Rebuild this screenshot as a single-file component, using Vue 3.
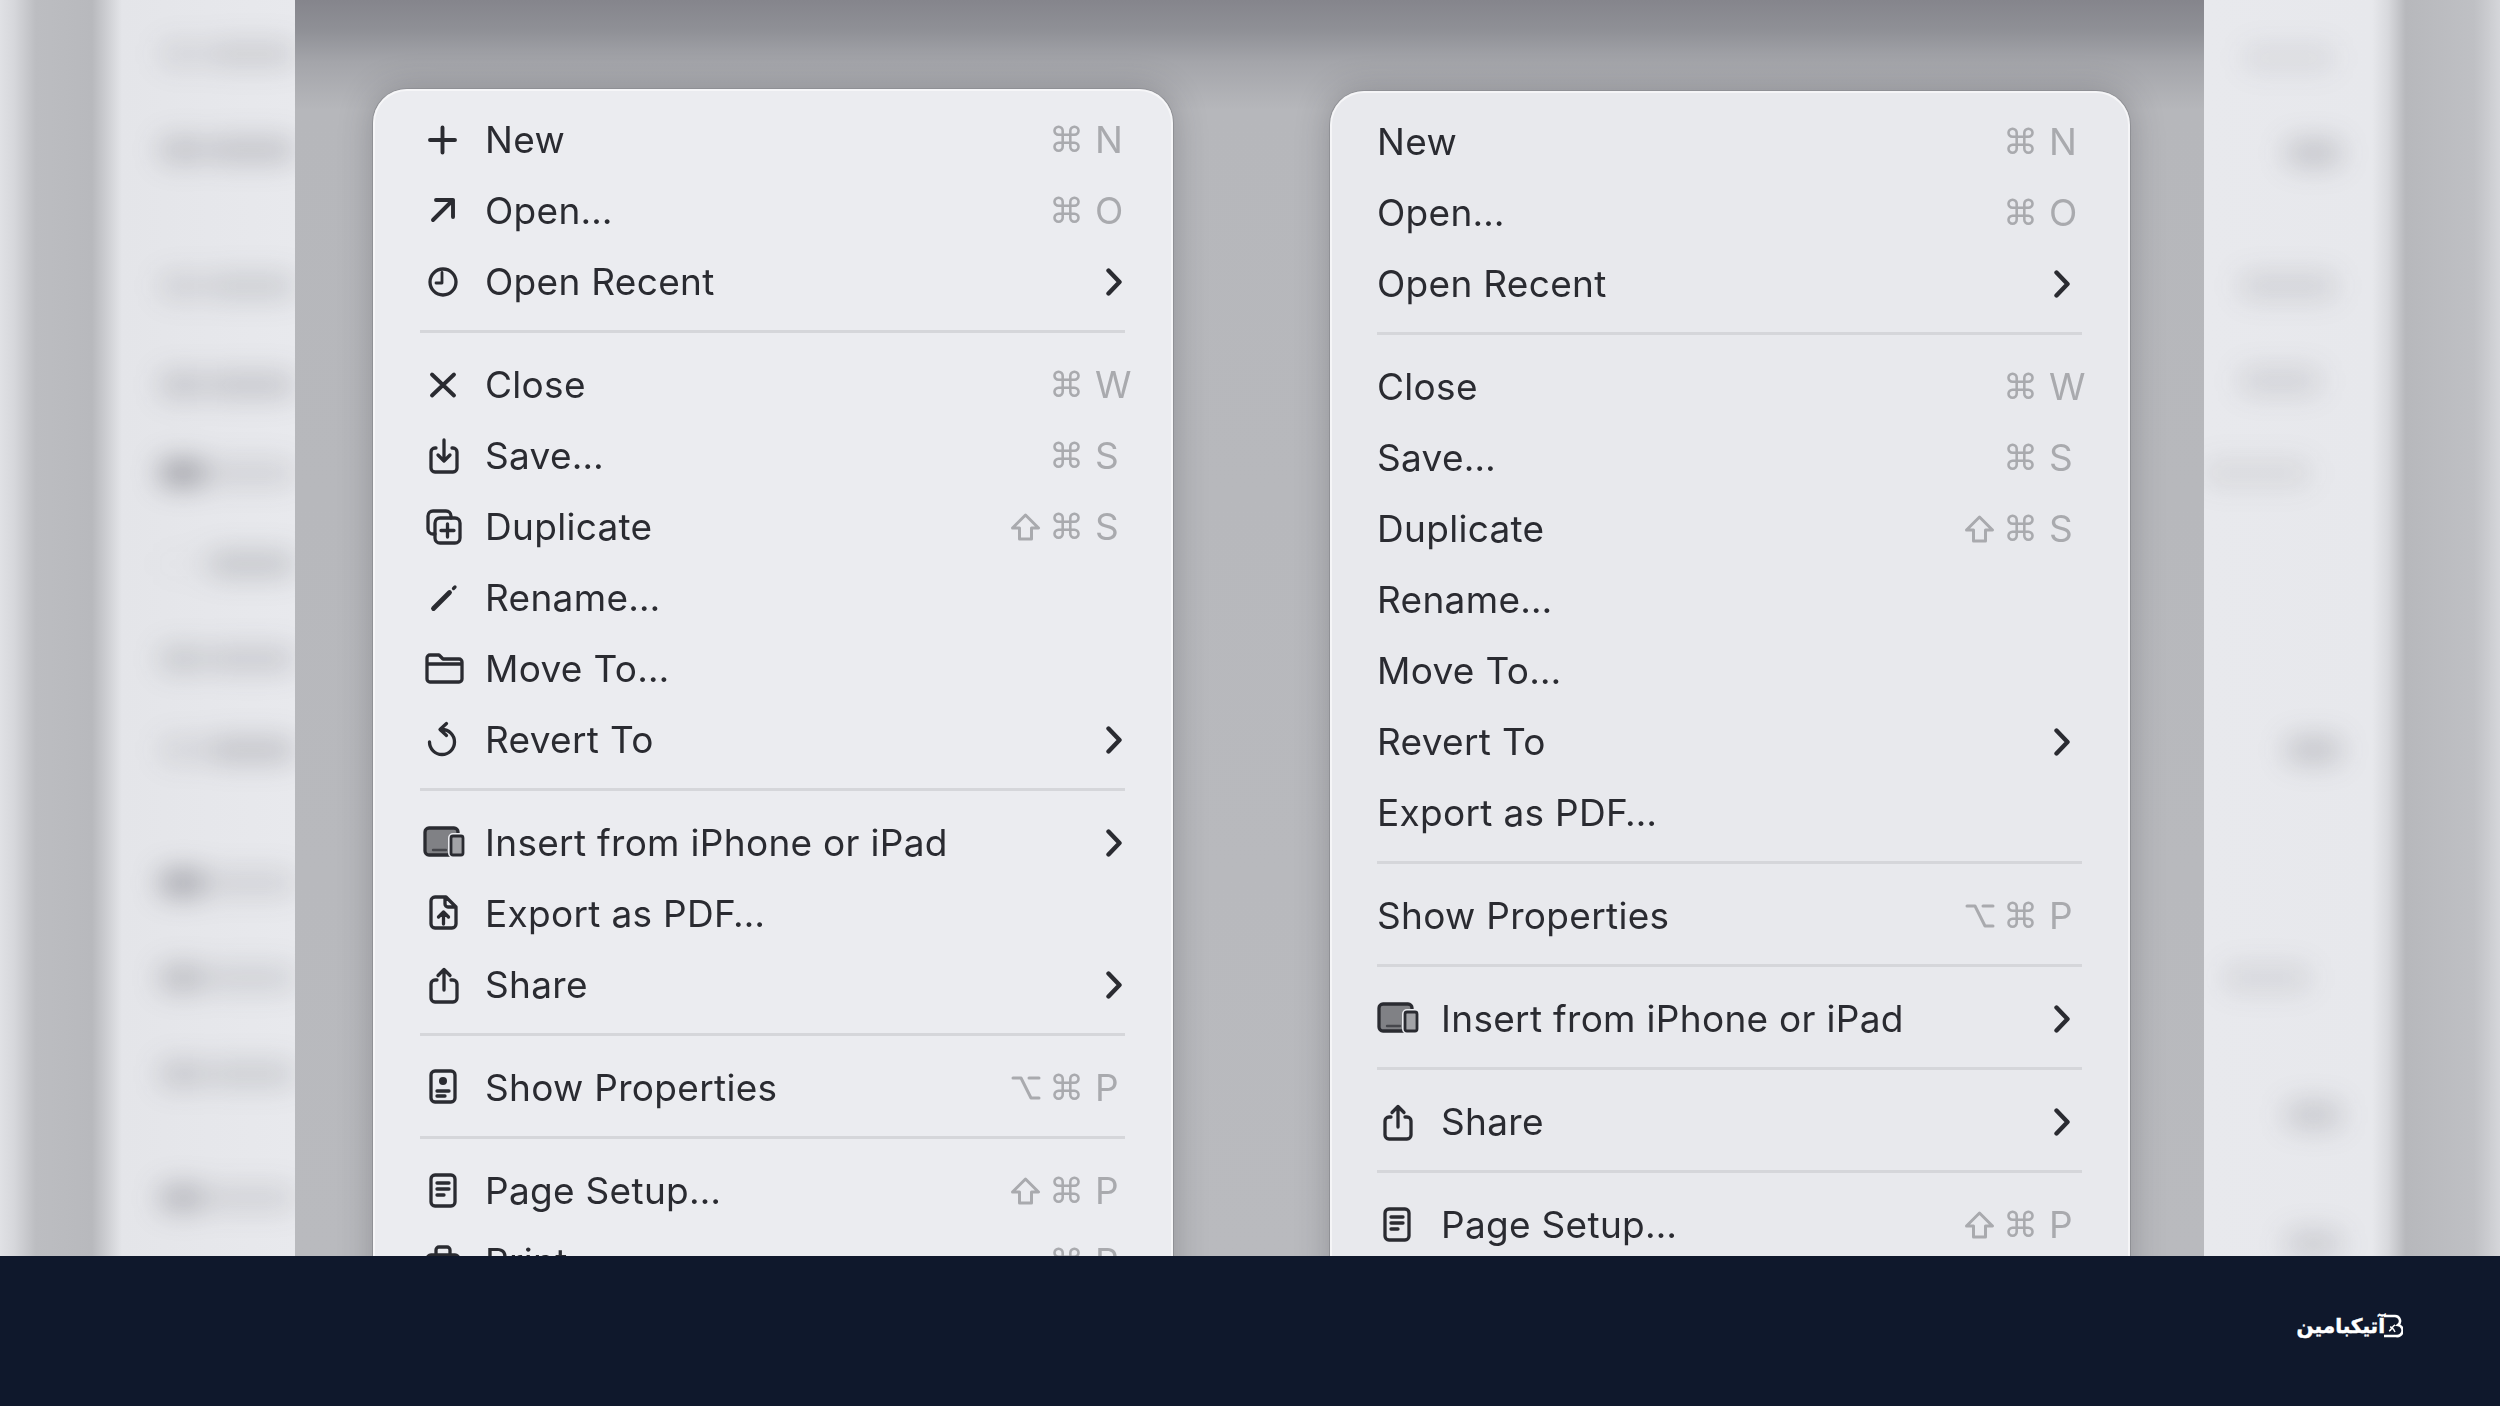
<script setup>
const icons = {
  plus: [{ d: 'M22.5 10.5V35.5M10 23H35', cls: 'bold' }],
  open: [{ d: 'M13 32L33 12M16 12H33V29', cls: 'bold' }],
  clock: [{ d: 'M36 23a13 13 0 1 1-26 0a13 13 0 0 1 26 0z' }, { d: 'M22 13.5V24H16', cls: 'thin' }],
  close: [{ d: 'M12 12.5L34 33.5M34 12.5L12 33.5', cls: 'bold' }],
  save: [{ d: 'M16 15h-1a4 4 0 0 0-4 4v16a4 4 0 0 0 4 4h18a4 4 0 0 0 4-4V19a4 4 0 0 0-4-4h-1M24 7V28M18 22l6 6 6-6' }],
  duplicate: [
    { d: 'M15 30h-2a5 5 0 0 1-5-5V12a5 5 0 0 1 5-5h13a5 5 0 0 1 5 5v2' },
    { d: 'M20 14h15a5 5 0 0 1 5 5v15a5 5 0 0 1-5 5H20a5 5 0 0 1-5-5V19a5 5 0 0 1 5-5zM27.5 20V33M21 26.5H34' }
  ],
  rename: [{ d: 'M13.5 33.5L29.5 17.5', cls: 'thick' }, { d: 'M33.5 13.5L35 12' }],
  folder: [{ d: 'M11 9h8l4 4h16a3 3 0 0 1 3 3v17a3 3 0 0 1-3 3H10a3 3 0 0 1-3-3V12a3 3 0 0 1 3-3zM7 18H42' }],
  revert: [{ d: 'M22 12.5A12.5 12.5 0 1 1 9.5 25M26.5 6.5L20 12.5L26.5 18.5' }],
  devices: [
    { d: 'M9 8h25a4 4 0 0 1 4 4v23H9a4 4 0 0 1-4-4V12a4 4 0 0 1 4-4z', cls: 'filled' },
    { d: 'M13 30H26', cls: 'bar' },
    { d: 'M33 16h8a2 2 0 0 1 2 2v15a2 2 0 0 1-2 2h-8a2 2 0 0 1-2-2V18a2 2 0 0 1 2-2z', cls: 'halo' },
    { d: 'M33 16h8a2 2 0 0 1 2 2v15a2 2 0 0 1-2 2h-8a2 2 0 0 1-2-2V18a2 2 0 0 1 2-2z', cls: 'phone' }
  ],
  exportPdf: [{ d: 'M15 6h11l10 10v17a4 4 0 0 1-4 4H15a4 4 0 0 1-4-4V10a4 4 0 0 1 4-4zM25 6v7a3 3 0 0 0 3 3h8M23.5 33V21M18.5 26l5-5 5 5' }],
  share: [{ d: 'M17 18h-2a4 4 0 0 0-4 4v14a4 4 0 0 0 4 4h18a4 4 0 0 0 4-4V22a4 4 0 0 0-4-4h-2M24 28V8M18 13.5l6-6 6 6' }],
  props: [
    { d: 'M15 6h16a4 4 0 0 1 4 4v23a4 4 0 0 1-4 4H15a4 4 0 0 1-4-4V10a4 4 0 0 1 4-4zM17 26H29M17 31H25' },
    { d: 'M19 16a4 4 0 1 0 8 0a4 4 0 1 0-8 0z', cls: 'solid' }
  ],
  page: [{ d: 'M15 7h16a4 4 0 0 1 4 4v23a4 4 0 0 1-4 4H15a4 4 0 0 1-4-4V11a4 4 0 0 1 4-4zM17 15H29M17 21H29M17 27H24' }],
  print: [{ d: 'M16 16V11a3 3 0 0 1 3-3h8a3 3 0 0 1 3 3v5M11 16h24a4 4 0 0 1 4 4v12H7V20a4 4 0 0 1 4-4z' }]
}

const leftMenu = [
  { label: 'New', icon: 'plus', mods: '⌘', key: 'N' },
  { label: 'Open…', icon: 'open', mods: '⌘', key: 'O' },
  { label: 'Open Recent', icon: 'clock', more: true },
  { sep: true },
  { label: 'Close', icon: 'close', mods: '⌘', key: 'W' },
  { label: 'Save…', icon: 'save', mods: '⌘', key: 'S' },
  { label: 'Duplicate', icon: 'duplicate', mods: '⇧⌘', key: 'S' },
  { label: 'Rename…', icon: 'rename' },
  { label: 'Move To…', icon: 'folder' },
  { label: 'Revert To', icon: 'revert', more: true },
  { sep: true },
  { label: 'Insert from iPhone or iPad', icon: 'devices', more: true },
  { label: 'Export as PDF…', icon: 'exportPdf' },
  { label: 'Share', icon: 'share', more: true },
  { sep: true },
  { label: 'Show Properties', icon: 'props', mods: '⌥⌘', key: 'P' },
  { sep: true },
  { label: 'Page Setup…', icon: 'page', mods: '⇧⌘', key: 'P' },
  { label: 'Print…', icon: 'print', mods: '⌘', key: 'P' }
]

const rightMenu = [
  { label: 'New', mods: '⌘', key: 'N' },
  { label: 'Open…', mods: '⌘', key: 'O' },
  { label: 'Open Recent', more: true },
  { sep: true },
  { label: 'Close', mods: '⌘', key: 'W' },
  { label: 'Save…', mods: '⌘', key: 'S' },
  { label: 'Duplicate', mods: '⇧⌘', key: 'S' },
  { label: 'Rename…' },
  { label: 'Move To…' },
  { label: 'Revert To', more: true },
  { label: 'Export as PDF…' },
  { sep: true },
  { label: 'Show Properties', mods: '⌥⌘', key: 'P' },
  { sep: true },
  { label: 'Insert from iPhone or iPad', icon: 'devices', more: true },
  { sep: true },
  { label: 'Share', icon: 'share', more: true },
  { sep: true },
  { label: 'Page Setup…', icon: 'page', mods: '⇧⌘', key: 'P' }
]

const menus = [
  { id: 'first', items: leftMenu },
  { id: 'second', items: rightMenu }
]

// blurred sidebar behind the panel, y is the row centre
const leftRows = [
  { y: 54, a: 0.1, b: 0.14 }, { y: 150, a: 0.2, b: 0.2 }, { y: 286, a: 0.12, b: 0.15 },
  { y: 385, a: 0.18, b: 0.18 }, { y: 473, a: 0.4, b: 0.12 }, { y: 564, a: 0.02, b: 0.19 },
  { y: 659, a: 0.17, b: 0.16 }, { y: 750, a: 0.1, b: 0.2 }, { y: 883, a: 0.36, b: 0.12 },
  { y: 978, a: 0.24, b: 0.13 }, { y: 1074, a: 0.18, b: 0.15 }, { y: 1198, a: 0.28, b: 0.12 }
]
const rightRows = [
  { y: 58, start: 40, width: 90, a: 0.08 }, { y: 153, start: 82, width: 55, a: 0.2 },
  { y: 286, start: 36, width: 96, a: 0.12 }, { y: 381, start: 36, width: 80, a: 0.12 },
  { y: 473, start: 0, width: 106, a: 0.09 }, { y: 750, start: 82, width: 55, a: 0.2 },
  { y: 978, start: 20, width: 86, a: 0.1 }, { y: 1115, start: 82, width: 55, a: 0.18 },
  { y: 1244, start: 82, width: 55, a: 0.16 }
]
const rowHeight = 26
const withGap = (rows) => rows.map((row, i) => ({
  ...row,
  gap: row.y - (i ? rows[i - 1].y : rowHeight / 2) - (i ? rowHeight : 0)
}))
const leftBlur = withGap(leftRows)
const rightBlur = withGap(rightRows)
</script>

<template>
  <div class="page">
    <div class="stage">
      <aside class="side side-left">
        <div class="blur-rows">
          <div v-for="row in leftBlur" :key="row.y" class="blur-row" :style="{ marginTop: row.gap + 'px' }">
            <span class="blob blob-icon" :style="{ opacity: row.a }"></span>
            <span class="blob blob-text" :style="{ opacity: row.b }"></span>
          </div>
        </div>
      </aside>

      <main class="panel">
        <section v-for="menu in menus" :key="menu.id" class="menu" :class="menu.id">
          <template v-for="(item, i) in menu.items" :key="i">
            <div v-if="item.sep" class="sep"></div>
            <div v-else class="row">
              <svg v-if="item.icon" class="icon" viewBox="0 0 46 46" width="46" height="46">
                <path v-for="(p, n) in icons[item.icon]" :key="n" :d="p.d" :class="p.cls" />
              </svg>
              <span class="label">{{ item.label }}</span>
              <span v-if="item.key" class="keys">
                <span class="mods">
                  <template v-for="c in item.mods" :key="c">
                    <svg v-if="c === '⇧'" class="mod-icon" viewBox="0 0 31 30" width="31" height="30">
                      <path d="M15.5 3L28.5 16H21.5V27H9.5V16H2.5Z" />
                    </svg>
                    <svg v-else-if="c === '⌥'" class="mod-icon" viewBox="0 0 30 30" width="30" height="30">
                      <path d="M2 5H10L20 25H28M18 5H28" />
                    </svg>
                    <span v-else class="cmd">{{ c }}</span>
                  </template>
                </span>
                <span class="letter">{{ item.key }}</span>
              </span>
              <svg v-if="item.more" class="chevron" viewBox="0 0 18 28" width="18" height="28">
                <path d="M3.5 2.5L14.5 14L3.5 25.5" />
              </svg>
            </div>
          </template>
        </section>
      </main>

      <aside class="side side-right">
        <div class="blur-rows">
          <div v-for="row in rightBlur" :key="row.y" class="blur-row" :style="{ marginTop: row.gap + 'px' }">
            <span class="blob" :style="{ marginLeft: row.start + 'px', width: row.width + 'px', opacity: row.a }"></span>
          </div>
        </div>
      </aside>
    </div>

    <footer class="bar">
      <div class="brand">
        <span class="brand-name" dir="rtl">آتیکبامین</span>
        <svg class="brand-mark" viewBox="0 0 20 24" width="20" height="24">
          <path d="M1 2H12a5 5 0 0 1 3 9a5.5 5.5 0 0 1-2 11H1" />
          <path d="M6 17c3-1 3-5 6-6M7 13c2 0 4 3 5 5" class="brand-inner" />
        </svg>
      </div>
    </footer>
  </div>
</template>

<style>
html, body {
  margin: 0;
  background: #0f182c;
}
</style>

<style scoped>
.page {
  width: 2500px;
  height: 1406px;
  display: flex;
  flex-direction: column;
  overflow: hidden;
  font-family: Inter, "Liberation Sans", sans-serif;
}

.stage {
  display: flex;
  height: 1256px;
  overflow: hidden;
}

.side {
  flex: none;
  overflow: hidden;
}
.side-left {
  width: 295px;
  background: linear-gradient(90deg, #e0e1e5 0, #d6d7db 14px, #bcbdc1 36px, #b8b9bd 92px, #c9cace 104px, #e4e5e9 122px, #e8e9ed 295px);
}
.side-right {
  width: 296px;
  background: linear-gradient(90deg, #e8e9ed 0, #e7e8ec 168px, #d8d9dd 184px, #b7b8bc 202px, #bfc0c4 270px, #d5d6da 296px);
}

.blur-rows {
  display: flex;
  flex-direction: column;
  filter: blur(14px);
}
.blur-row {
  display: flex;
  gap: 4px;
  height: 26px;
  flex: none;
}
.side-left .blur-row {
  padding-left: 160px;
}
.blob {
  display: block;
  height: 26px;
  background: #32333c;
  border-radius: 8px;
}
.blob-icon {
  width: 62px;
}
.blob-text {
  width: 120px;
}

.panel {
  flex: 1;
  display: flex;
  align-items: flex-start;
  gap: 157px;
  padding: 89px 0 0 78px;
  background: linear-gradient(180deg, #85858c 0, #8f9096 30px, #a4a5aa 62px, #b6b7bb 110px, #b9babe 100%);
  overflow: hidden;
}

.menu {
  flex: none;
  width: 800px;
  box-sizing: border-box;
  padding: 15px 48px 40px 47px;
  border-radius: 34px;
  background: #ebecf0;
  box-shadow: inset 0 0 0 2px rgba(255, 255, 255, 0.55), 0 0 0 1px #8f9095, 0 0 34px rgba(40, 40, 48, 0.28);
  filter: blur(0.5px);
}
.menu.second {
  margin-top: 2px;
  background: #e8e9ed;
}

.row {
  display: flex;
  align-items: center;
  height: 71px;
}

.sep {
  height: 3px;
  margin: 13px 0 16px;
  background: #d5d6da;
}

.icon {
  flex: none;
  margin-right: 19px;
  overflow: visible;
}
.second .icon {
  margin-right: 21px;
  margin-left: -3px;
}
.icon path {
  fill: none;
  stroke: #2a2b31;
  stroke-width: 3.3;
  stroke-linecap: round;
  stroke-linejoin: round;
}
.icon .bold {
  stroke-width: 3.9;
}
.icon .thin {
  stroke-width: 2.8;
}
.icon .thick {
  stroke-width: 4.8;
}
.icon .filled {
  fill: #808185;
}
.icon .bar {
  stroke: #46474c;
  stroke-width: 2.4;
}
.icon .halo {
  stroke: #ebecf0;
  stroke-width: 6;
}
.icon .phone {
  fill: #a2a3a7;
  stroke-width: 2.8;
}
.icon .solid {
  fill: #2a2b31;
  stroke: none;
}

.label {
  flex: 1;
  font-size: 37px;
  font-weight: 420;
  letter-spacing: 0.3px;
  line-height: 46px;
  color: #2a2b31;
  white-space: nowrap;
}

.keys {
  display: flex;
  align-items: center;
  color: #a9aaae;
}
.mods {
  display: flex;
  align-items: center;
  gap: 8px;
  margin-right: 11px;
}
.mod-icon {
  flex: none;
}
.mod-icon path {
  fill: none;
  stroke: #a9aaae;
  stroke-width: 3;
  stroke-linejoin: round;
  stroke-linecap: round;
}
.cmd {
  font-family: "DejaVu Sans", sans-serif;
  font-size: 35px;
  line-height: 40px;
}
.letter {
  width: 30px;
  font-size: 37px;
  white-space: nowrap;
}
.second .letter {
  width: 33px;
}

.chevron {
  flex: none;
  margin-right: 2px;
}
.second .chevron {
  margin-right: 11px;
}
.chevron path {
  fill: none;
  stroke: #2a2b31;
  stroke-width: 4.4;
  stroke-linecap: round;
  stroke-linejoin: round;
}

.bar {
  flex: none;
  height: 150px;
  background: #0f182c;
  display: flex;
  justify-content: flex-end;
}
.brand {
  display: flex;
  align-items: center;
  height: 150px;
  padding: 0 97px 10px 0;
  box-sizing: border-box;
}
.brand-name {
  font-family: "DejaVu Sans", sans-serif;
  font-weight: 700;
  font-size: 20px;
  color: #fff;
  -webkit-text-stroke: 0.5px #fff;
}
.brand-mark {
  margin-left: -2px;
}
.brand-mark path {
  fill: none;
  stroke: #fff;
  stroke-width: 2.6;
}
.brand-mark .brand-inner {
  stroke-width: 1.5;
}
</style>
